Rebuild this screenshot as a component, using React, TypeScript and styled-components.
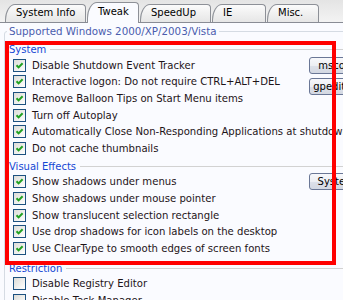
import React from "react";
import styled, { createGlobalStyle } from "styled-components";

const GlobalStyle = createGlobalStyle`
  html, body {
    margin: 0;
    padding: 0;
    overflow: hidden;
    background: #f0f0f0;
  }
  body {
    font-family: "DejaVu Sans", Verdana, sans-serif;
    font-size: 10px;
  }
`;

const Window = styled.div`
  position: relative;
  width: 343px;
  height: 300px;
  overflow: hidden;
`;

const TabStrip = styled.div`
  display: flex;
  align-items: flex-end;
  gap: 1px;
  height: 22px;
  padding-left: 5px;
  background: linear-gradient(#e4e4e4, #f3f3f3);
`;

const Tab = styled.div<{ $active?: boolean; $w: number }>`
  position: relative;
  z-index: ${(p) => (p.$active ? 2 : 1)};
  box-sizing: border-box;
  width: ${(p) => p.$w}px;
  height: ${(p) => (p.$active ? 21 : 18)}px;
  margin-bottom: ${(p) => (p.$active ? -1 : 0)}px;
  padding: ${(p) => (p.$active ? 2 : 1)}px 0 0 10px;
  line-height: 14px;
  color: #000;
  border: 1px solid #8d9097;
  border-bottom: none;
  border-radius: 10px 4px 0 0 / 16px 4px 0 0;
  background: ${(p) =>
    p.$active ? "#fafbff" : "linear-gradient(#fbfbfb, #e6e6e6)"};
`;

const Panel = styled.div`
  height: 277px;
  border-top: 1px solid #898c95;
  background: #fafbff;
`;

const GroupBox = styled.fieldset`
  width: 400px;
  margin: 1px 0 0 4px;
  padding: 0;
  border: 1px solid #d5dbe3;
  border-radius: 3px;
`;

const Legend = styled.legend`
  margin-left: 2px;
  padding: 0 2px;
  font-size: 10.3px;
  line-height: 14px;
  color: #4a5cae;
`;

const SectionHeader = styled.div<{ $gap: number }>`
  display: flex;
  align-items: center;
  gap: 4px;
  height: 15px;
  margin-top: ${(p) => p.$gap}px;
  padding-left: 4px;
  color: #1547d4;

  &::after {
    content: "";
    flex: 1;
    border-top: 1px solid #d2d2d2;
  }
`;

const SectionBody = styled.div`
  display: grid;
  grid-template-columns: 304px 64px;
`;

const List = styled.div`
  display: flex;
  flex-direction: column;
`;

const Row = styled.label`
  display: flex;
  align-items: center;
  gap: 6px;
  height: 16.6px;
  padding-left: 8px;
  white-space: nowrap;
  font-size: 10.1px;
  color: #1e1418;
`;

const Box = styled.span`
  display: flex;
  align-items: center;
  justify-content: center;
  flex-shrink: 0;
  box-sizing: border-box;
  width: 13px;
  height: 13px;
  border: 1px solid #1c5180;
  background: linear-gradient(135deg, #dcdcd7, #ffffff);
`;

const ButtonColumn = styled.div<{ $shift: number }>`
  display: flex;
  flex-direction: column;
  gap: 4px;
  margin-top: ${(p) => p.$shift}px;
`;

const Button = styled.div`
  box-sizing: border-box;
  width: 64px;
  height: 17px;
  line-height: 15px;
  text-align: center;
  white-space: nowrap;
  overflow: hidden;
  color: #000;
  border: 1px solid #6a7796;
  border-radius: 3px;
  background: linear-gradient(#f7f8fb 0%, #eceef3 50%, #dde1ea 51%, #d3d8e2 100%);
`;

const Highlight = styled.div`
  position: absolute;
  left: 5px;
  top: 41px;
  width: 331px;
  height: 224px;
  box-sizing: border-box;
  border: 4px solid #ff0000;
  pointer-events: none;
`;

const Check = ({ checked }: { checked: boolean }) => (
  <Box>
    {checked && (
      <svg width="11" height="11" viewBox="0 0 11 11">
        <path
          d="M2.5 5.2 L4.6 7.4 L8.6 3.2"
          fill="none"
          stroke="#21a121"
          strokeWidth="2"
        />
      </svg>
    )}
  </Box>
);

interface SectionProps {
  title: string;
  gap: number;
  items: string[];
  checked: boolean;
  buttons?: string[];
  shift?: number;
}

const Section: React.FC<SectionProps> = ({ title, gap, items, checked, buttons, shift = 0 }) => (
  <>
    <SectionHeader $gap={gap}>{title}</SectionHeader>
    <SectionBody>
      <List>
        {items.map((item) => (
          <Row key={item}>
            <Check checked={checked} />
            {item}
          </Row>
        ))}
      </List>
      {buttons && (
        <ButtonColumn $shift={shift}>
          {buttons.map((b) => (
            <Button key={b}>{b}</Button>
          ))}
        </ButtonColumn>
      )}
    </SectionBody>
  </>
);

const tabs = [
  { label: "System Info", w: 81 },
  { label: "Tweak", w: 52, active: true },
  { label: "SpeedUp", w: 71 },
  { label: "IE", w: 54 },
  { label: "Misc.", w: 52 },
];

const App: React.FC = () => (
  <Window>
    <GlobalStyle />
    <TabStrip>
      {tabs.map((t) => (
        <Tab key={t.label} $w={t.w} $active={t.active}>
          {t.label}
        </Tab>
      ))}
    </TabStrip>
    <Panel>
      <GroupBox>
        <Legend>Supported Windows 2000/XP/2003/Vista</Legend>
        <Section
          title="System"
          gap={4}
          checked
          buttons={["msconfig", "gpedit.msc"]}
          shift={-0.5}
          items={[
            "Disable Shutdown Event Tracker",
            "Interactive logon: Do not require CTRL+ALT+DEL",
            "Remove Balloon Tips on Start Menu items",
            "Turn off Autoplay",
            "Automatically Close Non-Responding Applications at shutdown",
            "Do not cache thumbnails",
          ]}
        />
        <Section
          title="Visual Effects"
          gap={2}
          checked
          buttons={["System..."]}
          shift={-1}
          items={[
            "Show shadows under menus",
            "Show shadows under mouse pointer",
            "Show translucent selection rectangle",
            "Use drop shadows for icon labels on the desktop",
            "Use ClearType to smooth edges of screen fonts",
          ]}
        />
        <Section
          title="Restriction"
          gap={4}
          checked={false}
          items={["Disable Registry Editor", "Disable Task Manager"]}
        />
      </GroupBox>
    </Panel>
    <Highlight />
  </Window>
);

export default App;
